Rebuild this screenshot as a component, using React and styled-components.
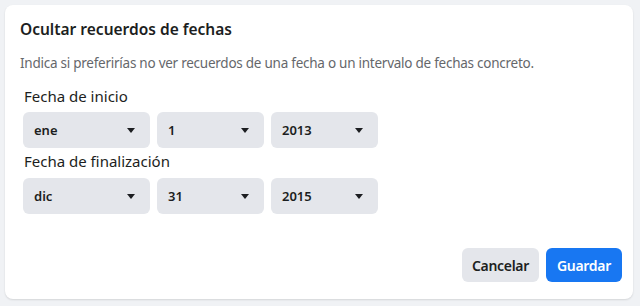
import React from "react";
import styled, { createGlobalStyle } from "styled-components";

const GlobalStyle = createGlobalStyle`
  body {
    margin: 0;
    background: #f0f2f5;
    font-family: "Noto Sans", "Open Sans", Arial, sans-serif;
  }
`;

const Page = styled.div`
  padding: 5px 7px 7px 5px;
`;

const Card = styled.div`
  background: #fff;
  border-radius: 8px;
  height: 294px;
  box-sizing: border-box;
  padding: 13px 11px 17px 15px;
  display: flex;
  flex-direction: column;
  box-shadow: 0 1px 2px rgba(0, 0, 0, 0.12);
`;

const Title = styled.h2`
  margin: 0;
  font-size: 15.5px;
  font-weight: 600;
  color: #1c1e21;
  line-height: 22px;
`;

const Desc = styled.p`
  margin: 13px 0 0;
  font-size: 13.5px;
  letter-spacing: -0.25px;
  color: #65676b;
  line-height: 20px;
`;

const Fields = styled.div`
  padding-left: 3px;
  margin-top: 13px;
`;

const Label = styled.div`
  font-size: 15px;
  color: #1c1e21;
  line-height: 20px;
  padding-left: 1px;
  margin: ${p => p.first ? "0" : "3px"} 0 ${p => p.first ? "6px" : "7px"};
`;

const Row = styled.div`
  display: flex;
  gap: 7px;
`;

const Select = styled.div`
  width: ${p => p.w}px;
  height: 36px;
  background: #e4e6eb;
  border-radius: 6px;
  display: flex;
  align-items: center;
  justify-content: space-between;
  padding: 0 15px 0 11px;
  box-sizing: border-box;
  font-size: 13px;
  font-weight: 600;
  color: #1c1e21;
`;

const Caret = styled.span`
  width: 0;
  height: 0;
  border-left: 4px solid transparent;
  border-right: 4px solid transparent;
  border-top: 5px solid #1c1e21;
`;

const Footer = styled.div`
  margin-top: auto;
  display: flex;
  justify-content: flex-end;
  gap: 7px;
`;

const Button = styled.button`
  height: 34px;
  border: none;
  border-radius: 6px;
  padding: 0;
  font-family: inherit;
  font-size: 14px;
  font-weight: 600;
  letter-spacing: -0.3px;
  background: ${p => p.primary ? "#1877f2" : "#e4e6eb"};
  color: ${p => p.primary ? "#fff" : "#1c1e21"};
  width: ${p => p.w}px;
`;

function DateRow({ values }) {
  const widths = [127, 107, 107];
  return (
    <Row>
      {values.map((v, i) => (
        <Select key={i} w={widths[i]}>
          <span>{v}</span>
          <Caret />
        </Select>
      ))}
    </Row>
  );
}

export default function App() {
  return (
    <>
      <GlobalStyle />
      <Page>
        <Card>
          <Title>Ocultar recuerdos de fechas</Title>
          <Desc>Indica si preferirías no ver recuerdos de una fecha o un intervalo de fechas concreto.</Desc>
          <Fields>
            <Label first>Fecha de inicio</Label>
            <DateRow values={["ene", "1", "2013"]} />
            <Label>Fecha de finalización</Label>
            <DateRow values={["dic", "31", "2015"]} />
          </Fields>
          <Footer>
            <Button w={77}>Cancelar</Button>
            <Button primary w={76}>Guardar</Button>
          </Footer>
        </Card>
      </Page>
    </>
  );
}
